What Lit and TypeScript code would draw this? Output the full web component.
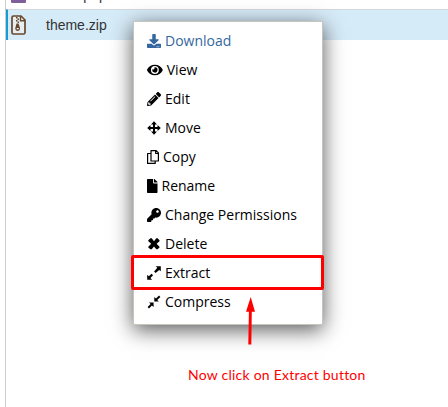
import { LitElement, html, svg, css } from "lit";
import { customElement } from "lit/decorators.js";

const fa = (w: number, d: string) => html`<svg width=${(w * 14) / 512} height="14" viewBox="0 0 ${w} 512"><path fill="currentColor" fill-rule="evenodd" d=${d} /></svg>`;
const small = (w: number, body: unknown) => html`<svg width=${w} height="14" viewBox="0 0 ${w} 14" fill="currentColor">${body}</svg>`;

const items = [
  { label: "Download", cls: "item link", icon: fa(512, "M216 0h80c13.300 0 24 10.700 24 24v168h87.700c17.800 0 26.700 21.500 14.100 34.100L269.700 378.300c-7.500 7.500-19.800 7.500-27.300 0L90.100 226.100c-12.600-12.600-3.700-34.100 14.100-34.100H192V24c0-13.300 10.700-24 24-24zm296 376v112c0 13.300-10.700 24-24 24H24c-13.300 0-24-10.700-24-24V376c0-13.300 10.700-24 24-24h146.700l49 49c20.100 20.100 52.500 20.100 72.600 0l49-49H488c13.300 0 24 10.700 24 24zm-124 88c0-11-9-20-20-20s-20 9-20 20 9 20 20 20 20-9 20-20zm64 0c0-11-9-20-20-20s-20 9-20 20 9 20 20 20 20-9 20-20z") },
  { label: "View", cls: "item", icon: fa(576, "M572.520 241.400C518.290 135.590 410.930 64 288 64S57.680 135.640 3.480 241.410a32.350 32.350 0 0 0 0 29.190C57.710 376.410 165.070 448 288 448s230.320-71.640 284.520-177.410a32.350 32.350 0 0 0 0-29.190zM288 400a144 144 0 1 1 144-144 143.930 143.930 0 0 1-144 144zm0-240a95.310 95.310 0 0 0-25.310 3.790 47.850 47.850 0 0 1-66.900 66.900A95.780 95.780 0 1 0 288 160z") },
  { label: "Edit", cls: "item", icon: fa(512, "M497.900 142.100l-46.100 46.100c-4.700 4.700-12.300 4.700-17 0l-111-111c-4.700-4.700-4.700-12.300 0-17l46.100-46.100c18.700-18.700 49.100-18.700 67.900 0l60.100 60.100c18.800 18.700 18.800 49.100 0 67.900zM284.200 99.800L21.600 362.400.4 483.900c-2.900 16.400 11.400 30.600 27.800 27.800l121.500-21.300 262.600-262.600c4.700-4.700 4.700-12.300 0-17l-111-111c-4.800-4.700-12.400-4.700-17.100 0zM124.100 339.900c-5.500-5.500-5.500-14.300 0-19.800l154-154c5.500-5.500 14.300-5.500 19.800 0s5.500 14.300 0 19.800l-154 154c-5.500 5.500-14.300 5.500-19.800 0zM88 424h48v36.300l-64.500 11.300-31.100-31.100L51.700 376H88v48z") },
  { label: "Move", cls: "item", icon: small(14, svg`<path d="M7 .2 10 3.500H8V6h2.500V4L13.800 7l-3.300 3V8H8v2.500h2L7 13.800 4 10.500h2V8H3.500v2L.2 7l3.300-3v2H6V3.500H4z"/>`) },
  { label: "Copy", cls: "item", icon: small(12, svg`<path d="M3.900 3.500H.6v9.900h7.600v-2.400M4 .6h5.200l2.200 2.200v8.200H4zM8.700.8v2.700h2.600" fill="none" stroke="currentColor" stroke-width="1.200" stroke-linejoin="round"/>`) },
  { label: "Rename", cls: "item", icon: fa(384, "M224 136V0H24C10.700 0 0 10.700 0 24v464c0 13.300 10.700 24 24 24h336c13.300 0 24-10.700 24-24V160H248c-13.200 0-24-10.800-24-24zm160-14.100v6.100H256V0h6.100c6.400 0 12.500 2.500 17 7l97.900 98c4.500 4.500 7 10.600 7 16.900z") },
  { label: "Change Permissions", cls: "item", icon: fa(512, "M512 176C512 273.200 433.200 352 336 352c-11.200 0-22.200-1-32.800-3L279.200 376A24 24 0 0 1 261.200 384H224v40c0 13.300-10.700 24-24 24h-40v40c0 13.300-10.700 24-24 24H24c-13.300 0-24-10.700-24-24v-78c0-6.400 2.500-12.500 7-17L168.800 231.200C163.100 213.800 160 195.300 160 176 160 78.800 238.800 0 336 0 433.500 0 512 78.500 512 176zM336 128c0 26.500 21.500 48 48 48s48-21.500 48-48-21.500-48-48-48-48 21.500-48 48z") },
  { label: "Delete", cls: "item", icon: small(14, svg`<path d="M1.300 3.300 3.400 1.200h1.300L7 4.200 9.300 1.200h1.300L12.500 3.300v.9L9.600 6.800l2.900 2.900v.9L10.600 12.300H9.300L7 9.400 4.700 12.300H3.400L1.300 10.600v-.9l2.900-2.900-2.900-2.600z"/>`) },
  { label: "Extract", cls: "item", icon: small(14, svg`<path d="M8.700.2h5.100v5.100L12.200 3.900 8.600 7 7.100 5.500 10.300 1.800zM.2 8.700l1.600 1.600 2.700-2.600 1.600 1.500-2.700 2.900 1.700 1.700H.2z"/>`) },
  { label: "Compress", cls: "item", icon: small(14, svg`<path d="M12 .6 13.400 2 10.200 4.900l1.700 1.700H7.300V2L9 3.600zM2 7.400h4.600V12L4.900 10.400 2 13.400.6 12 3.600 9z"/>`) },
];

@customElement("app-root")
export class AppRoot extends LitElement {
  static styles = css`
    :host { display: block; position: relative; width: 448px; height: 407px; overflow: hidden; background: #fff; }
    .list { box-sizing: border-box; height: 407px; margin-left: 5px; border-left: 1px solid #ccc; font: 14px/20px "Liberation Sans", sans-serif; color: #333; }
    .row { box-sizing: border-box; display: flex; align-items: center; height: 31px; border-top: 1px solid #d5d8dc; }
    .previous { height: 9px; border: 0; align-items: flex-end; overflow: hidden; }
    .selected { border-left: 2px solid #179bd7; background: #d6ebf8; }
    .thumb { width: 40px; display: flex; flex: none; }
    .selected .thumb { width: 38px; }
    .thumb svg { margin-left: 3px; }
    .previous .thumb svg { margin: 0 0 6px 5px; }
    .previous .name { margin-bottom: 4px; }
    .menu { position: absolute; left: 133px; top: 21px; width: 190px; height: 304px; box-sizing: border-box; padding: 4px 0 0 13px; background: #fff; border: 1px solid #c5c5bb; box-shadow: 0 5px 20px rgba(0,0,0,.65); }
    .item { display: flex; align-items: center; height: 29px; gap: 4px; color: #000; font: 14px/20px "Open Sans", sans-serif; white-space: nowrap; }
    .item svg { flex: none; }
    .link { color: #34679f; }
    .focus { position: absolute; left: 131px; top: 255px; width: 193px; height: 35px; box-sizing: border-box; border: 3px solid #f00; border-radius: 2px; }
    .arrow { position: absolute; left: 244px; top: 296px; }
    .caption { position: absolute; left: 188px; top: 365px; color: #f00; font: 14px/20px Lato, sans-serif; letter-spacing: .23px; white-space: nowrap; }
  `;
  render() {
    return html`
      <div class="list">
        <div class="row previous"><span class="thumb"><svg width="15" height="3"><path d="M0 0h15v2q0 1-1 1H1Q0 3 0 2z" fill="#80609c"/></svg></span><span class="name">index.php</span></div>
        <div class="row selected">
          <span class="thumb"><svg width="15" height="20" viewBox="0 0 15 20">
            <path d="M2.500 1h7.500l4 4v12.500q0 1.500-1.500 1.500h-10Q1 19 1 17.500v-15Q1 1 2.500 1z" fill="#e7eef0" stroke="#67482f" stroke-width="1.700"/>
            <path d="M9.500 1v4.700h4.600" fill="none" stroke="#67482f" stroke-width="1.400"/>
            <path d="M5 2h1.500v1.500H5zm1.500 1.500H8V5H6.500zM5 5h1.500v1.500H5zm1.500 1.500H8V8H6.500zM5.500 8.500h2l1.500 4.500a2.400 2.400 0 1 1-4.700 0z" fill="#67482f"/><path d="M5.700 13h2v1.300h-2z" fill="#fff"/>
          </svg></span><span class="name">theme.zip</span>
        </div>
      </div>
      <div class="menu">${items.map((i) => html`<div class=${i.cls}>${i.icon}<span>${i.label}</span></div>`)}</div>
      <div class="focus"></div>
      <svg class="arrow" width="14" height="50" viewBox="0 0 14 50"><path d="M6.700 1 11 15.700H7.800L7.300 48.500H4.300L4.900 15.700H2z" fill="#f00"/></svg>
      <div class="caption">Now click on Extract button</div>
    `;
  }
}
